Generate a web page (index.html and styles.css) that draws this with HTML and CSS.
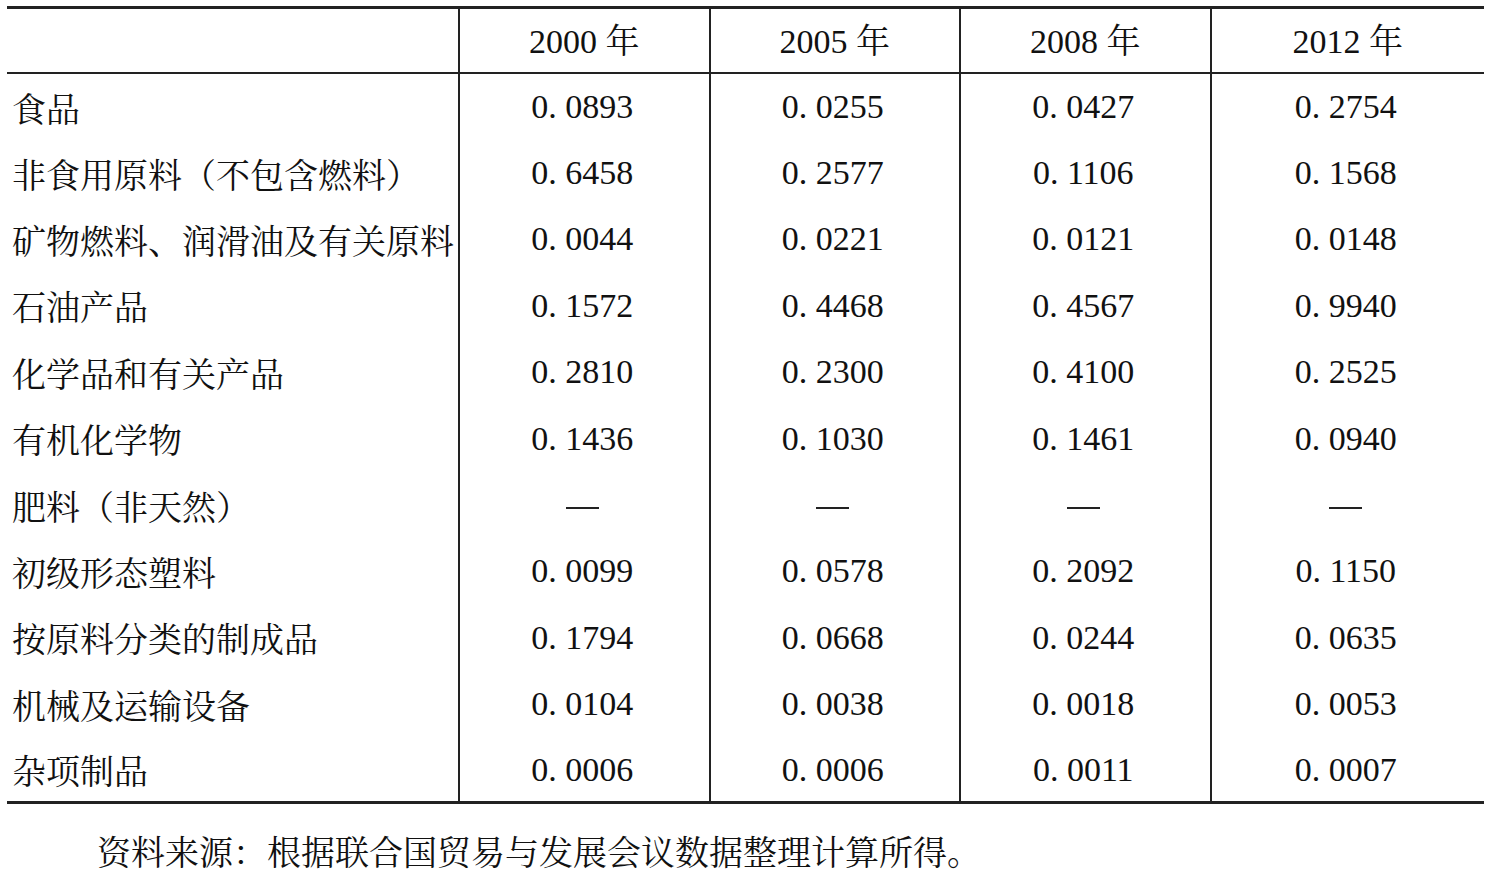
FILE: index.html
```html
<!DOCTYPE html>
<html lang="zh">
<head>
<meta charset="utf-8">
<link rel="stylesheet" href="styles.css">
</head>
<body>
<table class="data">
  <colgroup>
    <col class="c-label"><col class="c-year"><col class="c-year"><col class="c-year"><col>
  </colgroup>
  <thead>
    <tr><th class="label"></th><th>2000 年</th><th>2005 年</th><th>2008 年</th><th>2012 年</th></tr>
  </thead>
  <tbody>
    <tr><td class="label">食品</td><td>0. 0893</td><td>0. 0255</td><td>0. 0427</td><td>0. 2754</td></tr>
    <tr><td class="label">非食用原料（不包含燃料）</td><td>0. 6458</td><td>0. 2577</td><td>0. 1106</td><td>0. 1568</td></tr>
    <tr><td class="label">矿物燃料、润滑油及有关原料</td><td>0. 0044</td><td>0. 0221</td><td>0. 0121</td><td>0. 0148</td></tr>
    <tr><td class="label">石油产品</td><td>0. 1572</td><td>0. 4468</td><td>0. 4567</td><td>0. 9940</td></tr>
    <tr><td class="label">化学品和有关产品</td><td>0. 2810</td><td>0. 2300</td><td>0. 4100</td><td>0. 2525</td></tr>
    <tr><td class="label">有机化学物</td><td>0. 1436</td><td>0. 1030</td><td>0. 1461</td><td>0. 0940</td></tr>
    <tr><td class="label">肥料（非天然）</td><td><span class="dash"></span></td><td><span class="dash"></span></td><td><span class="dash"></span></td><td><span class="dash"></span></td></tr>
    <tr><td class="label">初级形态塑料</td><td>0. 0099</td><td>0. 0578</td><td>0. 2092</td><td>0. 1150</td></tr>
    <tr><td class="label">按原料分类的制成品</td><td>0. 1794</td><td>0. 0668</td><td>0. 0244</td><td>0. 0635</td></tr>
    <tr><td class="label">机械及运输设备</td><td>0. 0104</td><td>0. 0038</td><td>0. 0018</td><td>0. 0053</td></tr>
    <tr><td class="label">杂项制品</td><td>0. 0006</td><td>0. 0006</td><td>0. 0011</td><td>0. 0007</td></tr>
  </tbody>
</table>
<p class="source">资料来源：根据联合国贸易与发展会议数据整理计算所得。</p>
</body>
</html>
```

FILE: styles.css
```css
html, body {
  margin: 0;
  padding: 0;
  background: #ffffff;
}

body {
  font-family: "Liberation Serif", "Noto Serif CJK SC", "Noto Sans CJK SC", serif;
  font-size: 34px;
  color: #111111;
}

.data {
  margin: 6px 0 0 7px;
  width: 1477px;
  border-collapse: collapse;
  table-layout: fixed;
  border-top: 3px solid #222222;
  border-bottom: 3px solid #222222;
}

.c-label { width: 452px; }
.c-year { width: 250.5px; }

.data th,
.data td {
  padding: 0;
  font-weight: normal;
  text-align: center;
  border-left: 2px solid #222222;
  white-space: nowrap;
}

.data th.label,
.data td.label {
  border-left: none;
  text-align: left;
  padding-left: 5px;
}

.data thead tr { height: 65px; }
.data thead th {
  border-bottom: 2px solid #222222;
  padding-bottom: 3px;
}

.data tbody tr { height: 66.4px; }
.data tbody td { padding-top: 2px; }
.data tbody td:not(.label) { padding-right: 4px; }

.dash {
  display: inline-block;
  width: 33px;
  height: 2px;
  background: #222222;
  vertical-align: middle;
}

.source {
  margin: 30px 0 0 97px;
  line-height: 40px;
}
```
